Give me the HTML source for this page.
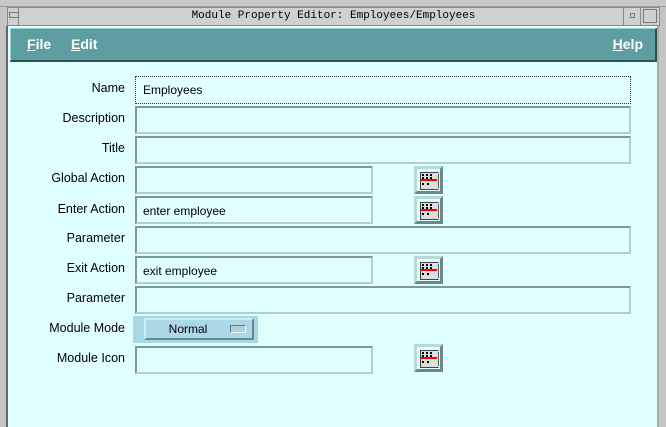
<html><head><style>
body{margin:0;width:666px;height:427px;background:#c4c4c4;position:relative;overflow:hidden;font-family:"Liberation Sans",sans-serif;font-size:12px}
.a{position:absolute}
.in{position:absolute;box-sizing:border-box;background:#e0ffff;border:2px solid;border-color:#7a9a9a #b0d0d0 #b0d0d0 #7a9a9a;height:28px;padding:6px 0 0 6px;font-size:12px}
.lb{position:absolute;right:541px;font-size:12.5px;color:#000}
.ib{position:absolute;box-sizing:border-box;width:29px;height:28px;border:3px solid;border-color:#b8d8d8 #6c8888 #6c8888 #b8d8d8;background:#e0ffff}
.ib i{position:absolute;left:3px;top:3px;width:17px;height:16px;background:#ddd;border:1px solid #444;border-right:1px solid #ddd}
.ib b{position:absolute;left:4px;top:10px;width:16px;height:2px;background:red}
.ib s{position:absolute;left:5px;height:2px;border-top:2px dotted #000}
.ib em{position:absolute;left:21px;top:5px;width:1px;height:14px;border-left:1px solid #555}
</style></head><body>
<div class="a" style="left:0;top:0;width:666px;height:6px;background:#c8c8c8;border-bottom:1px solid #999"></div>
<div class="a" style="left:7px;top:7px;width:651px;height:17px;background:#d0d0d0;border:1px solid #888;font-family:'Liberation Mono',monospace;font-size:11px;text-align:center;line-height:17px">Module Property Editor: Employees/Employees</div>
<div class="a" style="left:18px;top:7px;width:1px;height:18px;background:#888"></div>
<div class="a" style="left:623px;top:7px;width:1px;height:18px;background:#888"></div>
<div class="a" style="left:640px;top:7px;width:1px;height:18px;background:#888"></div>
<div class="a" style="left:9px;top:12px;width:8px;height:4px;border:1px solid #777"></div>
<div class="a" style="left:630px;top:13px;width:3px;height:3px;border:1px solid #777"></div>
<div class="a" style="left:643px;top:9px;width:12px;height:12px;border:1px solid #777"></div>
<div class="a" style="left:6px;top:26px;width:2px;height:401px;background:#666"></div>
<div class="a" style="left:8px;top:26px;width:650px;height:401px;background:#e0ffff"></div>
<div class="a" style="left:657px;top:26px;width:2px;height:401px;background:#aaa"></div>
<div class="a" style="left:10px;top:28px;width:644px;height:31px;background:#5f9ea0;border-right:2px solid #2f5050;border-bottom:2px solid #2f5050;border-top:1px solid #9cc;border-left:1px solid #9cc;color:#fff;font-size:14px;font-weight:bold;line-height:31px">
<span class="a" style="left:16px"><u>F</u>ile</span><span class="a" style="left:60px"><u>E</u>dit</span><span class="a" style="right:12px"><u>H</u>elp</span></div>
<div class="lb" style="top:81px">Name</div>
<div class="in" style="left:135px;top:76px;width:496px;border:1px dotted #333;padding:6px 0 0 7px">Employees</div>
<div class="lb" style="top:111px">Description</div><div class="in" style="left:135px;top:106px;width:496px"></div>
<div class="lb" style="top:141px">Title</div><div class="in" style="left:135px;top:136px;width:496px"></div>
<div class="lb" style="top:171px">Global Action</div><div class="in" style="left:135px;top:166px;width:238px"></div>
<div class="ib" style="left:414px;top:166px"><i></i><s style="top:5px;width:10px"></s><s style="top:8px;width:10px"></s><b></b><s style="top:14px;width:7px"></s><em></em></div>
<div class="lb" style="top:202px">Enter Action</div><div class="in" style="left:135px;top:196px;width:238px">enter employee</div>
<div class="ib" style="left:414px;top:196px"><i></i><s style="top:5px;width:10px"></s><s style="top:8px;width:10px"></s><b></b><s style="top:14px;width:7px"></s><em></em></div>
<div class="lb" style="top:231px">Parameter</div><div class="in" style="left:135px;top:226px;width:496px"></div>
<div class="lb" style="top:261px">Exit Action</div><div class="in" style="left:135px;top:256px;width:238px">exit employee</div>
<div class="ib" style="left:414px;top:256px"><i></i><s style="top:5px;width:10px"></s><s style="top:8px;width:10px"></s><b></b><s style="top:14px;width:7px"></s><em></em></div>
<div class="lb" style="top:291px">Parameter</div><div class="in" style="left:135px;top:286px;width:496px"></div>
<div class="lb" style="top:321px">Module Mode</div>
<div class="a" style="left:133px;top:316px;width:125px;height:27px;background:#a8d8e4"></div>
<div class="a" style="left:144px;top:318px;width:110px;height:22px;box-sizing:border-box;background:#add8e6;border:2px solid;border-color:#cfeef4 #6a8890 #6a8890 #cfeef4;text-align:center;line-height:18px;padding-right:26px;padding-left:4px">Normal</div>
<div class="a" style="left:230px;top:325px;width:14px;height:6px;background:#b0d0d8;border:1px solid;border-color:#5a7880 #e8ffff #e8ffff #5a7880"></div>
<div class="lb" style="top:351px">Module Icon</div><div class="in" style="left:135px;top:346px;width:238px"></div>
<div class="ib" style="left:414px;top:344px"><i></i><s style="top:5px;width:10px"></s><s style="top:8px;width:10px"></s><b></b><s style="top:14px;width:7px"></s><em></em></div>
</body></html>
